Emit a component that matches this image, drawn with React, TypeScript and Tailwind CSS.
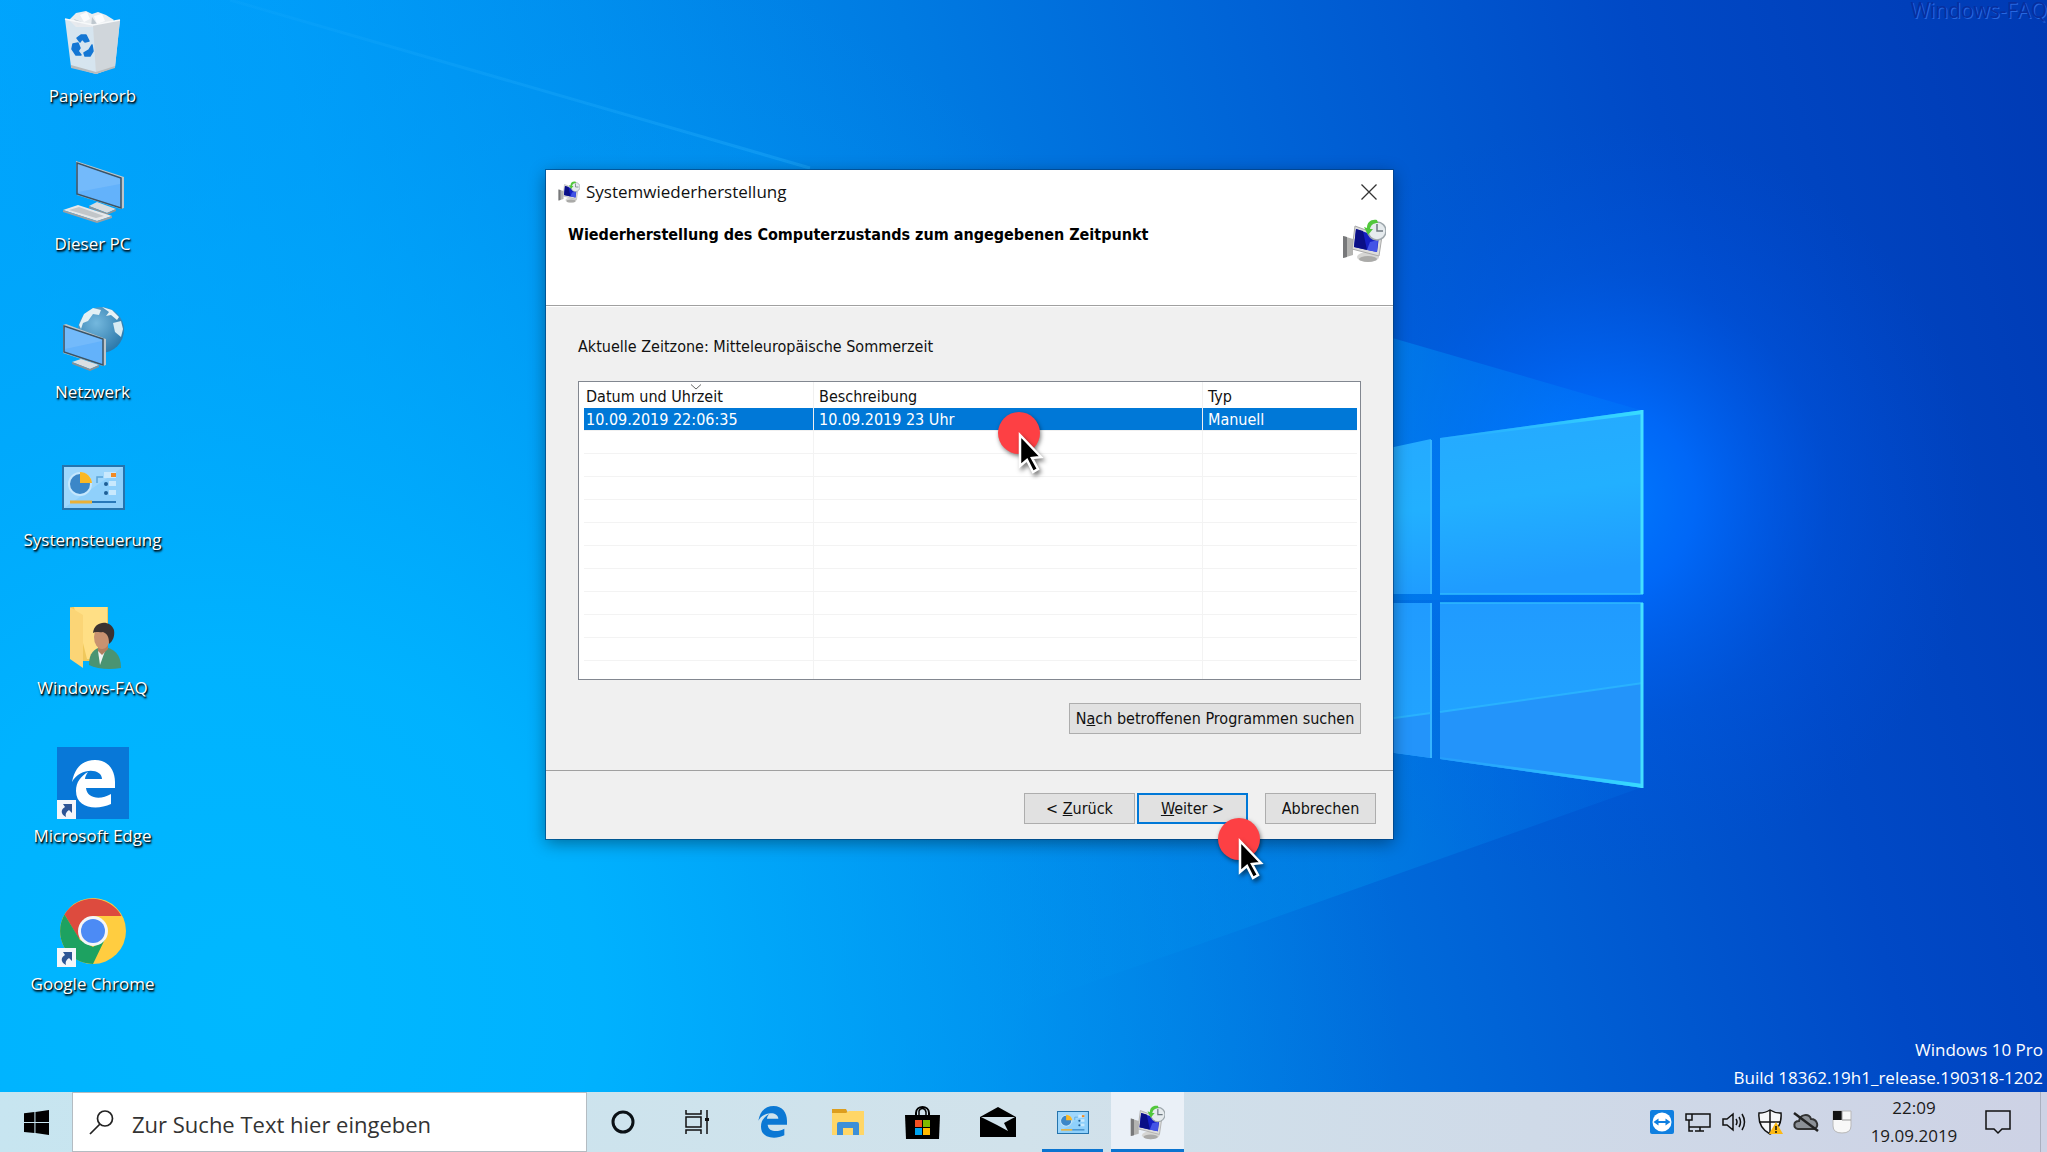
import type { ReactNode } from "react";

const restorePoints = [
  { id: 1, date: "10.09.2019 22:06:35", description: "10.09.2019 23 Uhr", type: "Manuell" },
];

const emptyRows = [1, 2, 3, 4, 5, 6, 7, 8, 9, 10];

function Wallpaper() {
  return (
    <svg
      className="absolute inset-0 h-full w-full"
      viewBox="0 0 2047 1152"
      preserveAspectRatio="xMidYMid slice"
      aria-hidden="true"
    >
      <defs>
        <linearGradient id="sky" x1="0" y1="0.15" x2="1" y2="0">
          <stop offset="0" stopColor="#00a8ff" />
          <stop offset="0.15" stopColor="#009ffb" />
          <stop offset="0.3" stopColor="#008eee" />
          <stop offset="0.45" stopColor="#007be2" />
          <stop offset="0.62" stopColor="#0062d6" />
          <stop offset="0.8" stopColor="#0049c6" />
          <stop offset="1" stopColor="#003ab4" />
        </linearGradient>
        <radialGradient id="low" gradientUnits="userSpaceOnUse" cx="250" cy="1000" r="1150">
          <stop offset="0" stopColor="#00b8ff" />
          <stop offset="0.3" stopColor="#00b4ff" stopOpacity="0.9" />
          <stop offset="0.65" stopColor="#00a4f8" stopOpacity="0.5" />
          <stop offset="1" stopColor="#0090f0" stopOpacity="0" />
        </radialGradient>
        <radialGradient id="glow" gradientUnits="userSpaceOnUse" cx="1600" cy="500" r="380">
          <stop offset="0" stopColor="#007cff" />
          <stop offset="0.25" stopColor="#006cff" stopOpacity="0.85" />
          <stop offset="0.6" stopColor="#005cf0" stopOpacity="0.3" />
          <stop offset="1" stopColor="#0050e0" stopOpacity="0" />
        </radialGradient>
        <linearGradient id="beam" gradientUnits="userSpaceOnUse" x1="560" y1="0" x2="1640" y2="0">
          <stop offset="0" stopColor="#00a8ff" stopOpacity="0" />
          <stop offset="0.75" stopColor="#00a4ff" stopOpacity="0.4" />
          <stop offset="1" stopColor="#0090ff" stopOpacity="0.15" />
        </linearGradient>
        <linearGradient id="beamLow" gradientUnits="userSpaceOnUse" x1="950" y1="0" x2="1640" y2="0">
          <stop offset="0" stopColor="#0098f0" stopOpacity="0" />
          <stop offset="0.6" stopColor="#0098f0" stopOpacity="0.35" />
          <stop offset="1" stopColor="#0090ff" stopOpacity="0.1" />
        </linearGradient>
        <linearGradient id="ray" gradientUnits="userSpaceOnUse" x1="230" y1="0" x2="810" y2="0">
          <stop offset="0" stopColor="#2ab4ff" stopOpacity="0.1" />
          <stop offset="1" stopColor="#2ab4ff" stopOpacity="0.35" />
        </linearGradient>
        <linearGradient id="paneTop" x1="0" y1="0" x2="0.2" y2="1">
          <stop offset="0" stopColor="#26a8ff" />
          <stop offset="0.55" stopColor="#22b0ff" />
          <stop offset="1" stopColor="#1f9cff" />
        </linearGradient>
        <linearGradient id="paneLow" x1="0" y1="0" x2="0" y2="1">
          <stop offset="0" stopColor="#209bff" />
          <stop offset="1" stopColor="#22a8ff" />
        </linearGradient>
        <linearGradient id="edge" x1="0" y1="0" x2="1" y2="0">
          <stop offset="0" stopColor="#28b4ff" stopOpacity="0.3" />
          <stop offset="1" stopColor="#38dcff" />
        </linearGradient>
      </defs>
      <rect width="2047" height="1152" fill="url(#sky)" />
      <rect width="2047" height="1152" fill="url(#low)" />
      <rect width="2047" height="1152" fill="url(#glow)" />
      <path d="M560 96L1640 410V600H560Z" fill="url(#beam)" />
      <path d="M950 600H1640V788L1240 930L950 1032Z" fill="url(#beamLow)" />
      <path d="M230 0L810 168" stroke="url(#ray)" strokeWidth="3" />
      <path d="M1380 450L1431 439V594H1380ZM1440 438L1643 410V594H1440Z" fill="url(#paneTop)" />
      <path d="M1380 603H1431V758L1380 751ZM1440 603H1643V788L1440 759Z" fill="url(#paneLow)" />
      <path d="M1380 720L1431 713V758L1380 751ZM1440 712L1643 683V788L1440 759Z" fill="#2394fa" />
      <path d="M1431 440V594M1431 603V758" stroke="#35b4ff" strokeWidth="2" />
      <path d="M1440 603H1643M1440 594H1643M1380 720L1431 713M1440 712L1643 683" stroke="#2cb8ff" strokeWidth="2" opacity="0.8" />
      <path d="M1440 438L1643 410L1643 414L1440 440ZM1440 759L1643 788V784L1440 757Z" fill="url(#edge)" />
      <path d="M1642 410V594M1642 603V788" stroke="#45e0ff" strokeWidth="3" />
    </svg>
  );
}

function ShortcutArrow() {
  return (
    <g>
      <path d="M1 53H20V72H1Z" fill="#f4f6fa" />
      <path d="M7 57H16V66L13 63C10 65 9 67 10 70C4 67 5 62 9 60Z" fill="#2d5595" />
    </g>
  );
}

function BinIcon() {
  return (
    <svg className="size-[72px]" viewBox="1 0 72 72">
      <path d="M13 13L20 6L30 4L36 7L42 5L50 8L58 13L52 20H20Z" fill="#e9edf0" />
      <path d="M24 8L31 5L34 12L28 15ZM38 9L46 7L49 14L41 17Z" fill="#fbfcfd" />
      <path d="M36 10L41 17L35 20ZM18 12L26 15L22 19Z" fill="#bfc8cf" />
      <path d="M9 12L37 18L64 13L59 60L40 67L15 60Z" fill="#e6eaee" opacity="0.93" />
      <path d="M37 18L64 13L59 60L40 67Z" fill="#d0d6db" />
      <path d="M9 12L37 18L64 13" stroke="#f7f9fa" strokeWidth="1.5" fill="none" />
      <path d="M15 58L40 65L59 59V61L40 67L15 61Z" fill="#b8bbbd" />
      <path
        d="M21 31L25 28H30L33 34L29 35L26 32L24 35ZM17 37L22 36L24 41L22 44L25 48L20 48L16 42ZM28 46L33 43L36 38L37 44L34 49L29 49Z"
        fill="#1477d4"
        stroke="#1477d4"
        strokeWidth="1.5"
        strokeLinejoin="round"
      />
    </svg>
  );
}

function ComputerIcon() {
  return (
    <svg className="size-[72px]" viewBox="2 -1 72 72">
      <path d="M34 50L42 46L61 53L52 57Z" fill="#d8dde0" />
      <path d="M34 50L52 57L61 53V55L52 59L34 52Z" fill="#8d9498" />
      <path d="M21 5L24 6L69 21V52L66 53L22 39Z" fill="#bcc5ca" />
      <path d="M22 7L66 22V52L22 38Z" fill="#63b2fb" stroke="#3b5364" strokeWidth="1.5" />
      <path d="M23 8L65 23V28L23 36Z" fill="#8cc6fc" opacity="0.4" />
      <path d="M8 54L23 49L57 60L42 65Z" fill="#e6e8ea" />
      <path d="M8 54L42 65L57 60V62L42 67L8 56Z" fill="#9ba1a5" />
      <path d="M14 54L24 51L49 60L41 62Z" fill="#c2c6c9" />
    </svg>
  );
}

function NetworkIcon() {
  return (
    <svg className="size-[72px]" viewBox="2 0 72 72">
      <defs>
        <radialGradient id="globe" cx="0.4" cy="0.35" r="0.7">
          <stop offset="0" stopColor="#74b8de" />
          <stop offset="1" stopColor="#2a76a8" />
        </radialGradient>
      </defs>
      <circle cx="46" cy="27" r="23" fill="url(#globe)" />
      <path d="M24 22L29 11L38 5L46 7L44 12L38 11L33 18L28 20L26 26Z" fill="#e2f0f5" />
      <path d="M47 4L57 7L64 14L62 17L56 12L51 13L54 9Z" fill="#e6f2f6" />
      <path d="M58 20L66 18L68 26L66 34L60 29Z" fill="#d8ebf3" />
      <path d="M17 59L26 56L44 62L35 66Z" fill="#dadfe2" />
      <path d="M17 59L35 66L44 62V64L35 68L17 61Z" fill="#899196" />
      <path d="M8 22L11 21L51 36V62L48 63L8 50Z" fill="#bcc5ca" />
      <path d="M9 23L48 36V62L9 49Z" fill="#63b2fb" stroke="#3b5364" strokeWidth="1.5" />
      <path d="M10 24L47 37V38L10 46Z" fill="#8cc6fc" opacity="0.4" />
    </svg>
  );
}

function ControlPanelArt() {
  return (
    <g>
      <path d="M7 14H68V57H7Z" fill="#8fd0fb" stroke="#2574ad" strokeWidth="2" />
      <path d="M8 15H67L8 56Z" fill="#a9dcfd" opacity="0.6" />
      <circle cx="24" cy="32" r="11" fill="#3b87c8" stroke="#c4e7fd" strokeWidth="2" />
      <path d="M24 20V31H36A12 12 0 0 0 24 20Z" fill="#fbb824" />
      <path d="M41 31V25H47" stroke="#5aa4d8" strokeWidth="1.5" fill="none" />
      <path d="M48 20H60V26H48ZM53 29H60V34H53ZM53 38H60V43H53Z" fill="#c9e9fd" />
      <path d="M55 21H60V25H55Z" fill="#f08a24" />
      <circle cx="50" cy="32" r="2" fill="#1e5f96" />
      <circle cx="50" cy="41" r="2" fill="#1e5f96" />
      <path d="M14 50H36" stroke="#eab035" strokeWidth="3" />
      <path d="M36 50H60" stroke="#2878b8" strokeWidth="2" />
    </g>
  );
}

function UserFolderIcon() {
  return (
    <svg className="size-[72px]" viewBox="0 0 72 72">
      <path d="M14 8H51V62H26Z" fill="#f0c85c" />
      <path d="M17 8H50V60H30Z" fill="#ffdf85" />
      <path d="M13 8L26 16V69L13 60Z" fill="#fbd576" />
      <path d="M32 66C32 54 37 49 46 48C57 49 64 55 64 69C52 71 40 70 32 66Z" fill="#4a9472" />
      <path d="M41 52L43 66L48 52Z" fill="#f2f4f2" />
      <path d="M41 44H51V50L45 56L41 52Z" fill="#b17f60" />
      <ellipse cx="45" cy="38" rx="8" ry="12" fill="#c99270" />
      <path d="M36 34C37 22 53 20 57 31C58 37 56 42 52 45C52 37 50 35 46 33C42 34 39 32 36 34Z" fill="#3b3230" />
    </svg>
  );
}

// Spartan "e", drawn on a 44 x 48 grid
const edgePath =
  "M0 22C3 6 12 0 23 0C36 0 43 10 43 22V28H14C15 39 29 40 39 34V44C24 51 4 48 4 31C4 22 9 16 16 12C14 15 13 17 13 19H30C30 8 8 7 0 22Z";

function EdgeIcon() {
  return (
    <svg className="size-[72px]" viewBox="1 0 72 72">
      <path d="M1 0H73V72H1Z" fill="#0878d8" />
      <g transform="translate(16 13)">
        <path d={edgePath} fill="#fff" />
      </g>
      <ShortcutArrow />
    </svg>
  );
}

function ChromeIcon() {
  return (
    <svg className="size-[72px]" viewBox="1 0 72 72">
      <circle cx="37" cy="36" r="33" fill="#ffcd40" />
      <path d="M8.500 19.500A33 33 0 0 1 65.500 21H37L23 44Z" fill="#dd4b3e" />
      <path d="M8.500 19.500L24 45L37 52L49 44L37 69A33 33 0 0 1 8.500 19.500Z" fill="#1da261" />
      <circle cx="37" cy="36" r="15" fill="#f4f6f8" />
      <circle cx="37" cy="36" r="12" fill="#4c8bf5" />
      <ShortcutArrow />
    </svg>
  );
}

function RestoreIcon({ className }: { className: string }) {
  return (
    <svg className={className} viewBox="0 0 44 44" aria-hidden="true">
      <path d="M1 17L11 20V36L1 39Z" fill="#b4b4b2" />
      <path d="M1 17L5 18V38L1 39Z" fill="#77787a" />
      <ellipse cx="26" cy="38" rx="11" ry="5" fill="#d6d6d4" />
      <ellipse cx="26" cy="40" rx="9" ry="3" fill="#aaaaa8" />
      <path d="M13 7L40 17L37 37L10 30Z" fill="#dcdcda" stroke="#a9a9a9" />
      <path d="M14 10L37 18L35 33L12 28Z" fill="#1520c4" />
      <path d="M14 10L21 12L25 31L12 28Z" fill="#0a0f86" />
      <path d="M28 23L36 21L35 33L25 31Z" fill="#4354e6" />
      <circle cx="35" cy="12" r="9" fill="#e6ebee" stroke="#9fa8ad" strokeWidth="1.5" />
      <path d="M35 5V12H41" stroke="#6d7880" strokeWidth="1.5" fill="none" />
      <path d="M35 1C29 0 25 3 25 9L22 8L26 16L31 10L28 10C29 6 31 4 36 4Z" fill="#52c83c" />
    </svg>
  );
}

const desktopIcons: { label: string; icon: ReactNode }[] = [
  { label: "Papierkorb", icon: <BinIcon /> },
  { label: "Dieser PC", icon: <ComputerIcon /> },
  { label: "Netzwerk", icon: <NetworkIcon /> },
  {
    label: "Systemsteuerung",
    icon: (
      <svg className="size-[72px]" viewBox="1 -1 72 72">
        <ControlPanelArt />
      </svg>
    ),
  },
  { label: "Windows-FAQ", icon: <UserFolderIcon /> },
  { label: "Microsoft Edge", icon: <EdgeIcon /> },
  { label: "Google Chrome", icon: <ChromeIcon /> },
];

function ClickMarker({ className }: { className: string }) {
  return (
    <svg className={`pointer-events-none absolute h-[72px] w-[60px] ${className}`} viewBox="0 0 60 72" aria-hidden="true">
      <g className="drop-shadow-[1px_2px_2px_rgba(0,0,0,0.5)]">
        <circle cx="25" cy="25" r="21" fill="#fd4044" />
      </g>
      <g className="drop-shadow-[2px_3px_2px_rgba(0,0,0,0.5)]">
        <path
          d="M26 27V58L33 52L39 64L44 61L38 50L47 49Z"
          fill="#000"
          stroke="#fff"
          strokeWidth="2.500"
        />
      </g>
    </svg>
  );
}

function RestoreDialog() {
  return (
    <section
      aria-labelledby="dialog-title"
      className="absolute left-[546px] top-[170px] w-[847px] bg-[#f0f0f0] font-['DejaVu_Sans_Condensed','Noto_Sans',sans-serif] text-[16px] leading-[20px] text-[#111] shadow-[0_0_0_1px_rgba(0,60,120,0.6),0_4px_16px_rgba(0,0,0,0.4)]"
    >
      <header className="h-[136px] border-b border-[#a0a0a0] bg-white">
        <div className="flex h-11 items-center pl-3 pr-4">
          <RestoreIcon className="size-[22px]" />
          <h1
            id="dialog-title"
            className="ml-[6px] font-['Open_Sans','Noto_Sans',sans-serif] text-[17px]"
          >
            Systemwiederherstellung
          </h1>
          <button type="button" aria-label="Schließen" className="ml-auto">
            <svg className="size-4" viewBox="0 0 16 16" stroke="#333" strokeWidth="1.300">
              <path d="M0.500 0.500L15.500 15.500M15.500 0.500L0.500 15.500" />
            </svg>
          </button>
        </div>
        <div className="flex items-start justify-between pl-[22px] pr-[7px]">
          <h2 className="pt-[11px] font-bold text-black">
            Wiederherstellung des Computerzustands zum angegebenen Zeitpunkt
          </h2>
          <RestoreIcon className="mt-[5px] size-11" />
        </div>
      </header>

      <div className="border-t border-white px-8 pt-[30px]">
        <p>Aktuelle Zeitzone: Mitteleuropäische Sommerzeit</p>
        <div className="mt-6 border border-[#828790] bg-white pl-[5px] pr-[3px]">
          <table className="w-full table-fixed border-separate border-spacing-0 text-left">
            <colgroup>
              <col className="w-[230px]" />
              <col className="w-[389px]" />
              <col />
            </colgroup>
            <thead>
              <tr className="h-[26px]">
                <th scope="col" className="relative border-r border-[#f0f0f0] pb-0 pl-[2px] pt-[3px] font-normal">
                  Datum und Uhrzeit
                  <svg className="absolute left-[106px] top-[2px] h-[6px] w-3" viewBox="0 0 12 6" fill="none" stroke="#666">
                    <path d="M1 0.500L6 5L11 0.500" />
                  </svg>
                </th>
                <th scope="col" className="border-r border-[#f0f0f0] pb-0 pl-[5px] pt-[3px] font-normal">
                  Beschreibung
                </th>
                <th scope="col" className="pb-0 pl-[5px] pt-[3px] font-normal">
                  Typ
                </th>
              </tr>
            </thead>
            <tbody>
              {restorePoints.map((point) => (
                <tr key={point.id} className="h-[23px] bg-[#0078d7] text-white">
                  <td className="border-b border-r border-[#f0f0f0] pb-0 pl-[2px] pt-[2px]">{point.date}</td>
                  <td className="border-b border-r border-[#f0f0f0] pb-0 pl-[5px] pt-[2px]">{point.description}</td>
                  <td className="border-b border-[#f0f0f0] pb-0 pl-[5px] pt-[2px]">{point.type}</td>
                </tr>
              ))}
              {emptyRows.map((row) => (
                <tr key={row} className="h-[23px]">
                  <td className="border-b border-r border-[#f3f3f3]" />
                  <td className="border-b border-r border-[#f3f3f3]" />
                  <td className="border-b border-[#f3f3f3]" />
                </tr>
              ))}
              <tr className="h-[18px]">
                <td className="border-r border-[#f3f3f3]" />
                <td className="border-r border-[#f3f3f3]" />
                <td />
              </tr>
            </tbody>
          </table>
        </div>
        <div className="flex justify-end pb-9 pt-[23px]">
          <button type="button" className="h-[31px] w-[292px] border border-[#adadad] bg-[#e1e1e1]">
            N<u>a</u>ch betroffenen Programmen suchen
          </button>
        </div>
      </div>

      <footer className="flex justify-end border-t border-[#a0a0a0] pb-[15px] pr-[17px] pt-[22px]">
        <button type="button" className="h-[31px] w-[111px] border border-[#adadad] bg-[#e1e1e1]">
          &lt; <u>Z</u>urück
        </button>
        <button type="button" className="ml-[2px] h-[31px] w-[111px] border-2 border-[#0078d7] bg-[#e1e1e1]">
          <u>W</u>eiter &gt;
        </button>
        <button type="button" className="ml-[17px] h-[31px] w-[111px] border border-[#adadad] bg-[#e1e1e1]">
          Abbrechen
        </button>
      </footer>

      <ClickMarker className="left-[448px] top-[238px]" />
      <ClickMarker className="left-[668px] top-[644px]" />
    </section>
  );
}

const pinnedApps: { name: string; state: "pinned" | "open" | "active"; icon: ReactNode }[] = [
  {
    name: "Cortana",
    state: "pinned",
    icon: (
      <svg className="size-6" viewBox="0 0 24 24">
        <circle cx="12" cy="12" r="10" fill="none" stroke="#0b1116" strokeWidth="3" />
      </svg>
    ),
  },
  {
    name: "Taskansicht",
    state: "pinned",
    icon: (
      <svg className="h-6 w-[26px]" viewBox="0 0 26 24" fill="none" stroke="#111" strokeWidth="1.500">
        <path d="M1 0V4H16V0M1 7H16V17H1ZM1 24V20H16V24M22 0V24" />
        <path d="M20 8H24V11H20Z" fill="#111" stroke="none" />
      </svg>
    ),
  },
  {
    name: "Microsoft Edge",
    state: "pinned",
    icon: (
      <svg className="size-8" viewBox="0 0 44 48">
        <path d={edgePath} fill="#0b78d4" />
      </svg>
    ),
  },
  {
    name: "Explorer",
    state: "pinned",
    icon: (
      <svg className="h-7 w-8" viewBox="0 0 32 28">
        <path d="M0 1H14L16 5H0Z" fill="#dd9e1e" />
        <path d="M0 5H14L17 3H32V27H0Z" fill="#ffd666" />
        <path d="M5 27V16Q5 14 7 14H25Q27 14 27 16V27H21V20H11V27Z" fill="#3c8fd8" />
      </svg>
    ),
  },
  {
    name: "Microsoft Store",
    state: "pinned",
    icon: (
      <svg className="size-[35px]" viewBox="0 0 35 35">
        <path d="M11 12V8C11 0 24 0 24 8V12" fill="none" stroke="#000" strokeWidth="2" />
        <path d="M14 10V6C15 3 20 2 21 7V10" fill="none" stroke="#000" strokeWidth="1.500" />
        <path d="M0 10H35L34 34H1Z" fill="#000" />
        <path d="M10 15H17V22H10Z" fill="#f25022" />
        <path d="M18 15H25V22H18Z" fill="#7fba00" />
        <path d="M10 23H17V30H10Z" fill="#00a4ef" />
        <path d="M18 23H25V30H18Z" fill="#ffb900" />
      </svg>
    ),
  },
  {
    name: "Mail",
    state: "pinned",
    icon: (
      <svg className="h-[30px] w-9" viewBox="0 0 36 30">
        <path d="M0 10L18 0L36 10V30H0Z" fill="#000" />
        <path d="M1 10H35L24 16L28 24L17 18Z" fill="#d0e2ec" />
      </svg>
    ),
  },
  {
    name: "Systemsteuerung",
    state: "open",
    icon: (
      <svg className="h-[23px] w-8" viewBox="6 13 63 45">
        <ControlPanelArt />
      </svg>
    ),
  },
  { name: "Systemwiederherstellung", state: "active", icon: <RestoreIcon className="size-[35px]" /> },
];

const trayIcons: { name: string; icon: ReactNode }[] = [
  {
    name: "TeamViewer",
    icon: (
      <svg className="size-6" viewBox="0 0 24 24">
        <rect width="24" height="24" rx="2" fill="#0f7fe0" />
        <circle cx="12" cy="12" r="9.500" fill="#fff" />
        <path d="M3.500 12L8.500 8.500V11H15.500V8.500L20.500 12L15.500 15.500V13H8.500V15.500Z" fill="#0f7fe0" />
      </svg>
    ),
  },
  {
    name: "Netzwerk",
    icon: (
      <svg className="size-[26px]" viewBox="0 0 26 26" fill="none" stroke="#111" strokeWidth="1.500">
        <path d="M7 5H25V18H4V12M1 5H7V11H1ZM4 11V22H8M15 18V22M10 22H19" />
      </svg>
    ),
  },
  {
    name: "Lautsprecher",
    icon: (
      <svg className="size-6" viewBox="0 0 24 24" fill="none" stroke="#111" strokeWidth="1.500">
        <path d="M1 9H5L11 4V20L5 15H1ZM14 9Q16 12 14 15M17 7Q20 12 17 17M20 4Q25 12 20 20" />
      </svg>
    ),
  },
  {
    name: "Windows-Sicherheit",
    icon: (
      <svg className="size-[26px]" viewBox="0 0 26 26">
        <path d="M13 1C16 3 20 4 24 4C25 15 21 21 13 25C5 21 1 15 2 4C6 4 10 3 13 1Z" fill="#f6f7f9" stroke="#111" strokeWidth="1.500" />
        <path d="M13 1V25M2 13H24" stroke="#111" strokeWidth="1.500" />
        <path d="M19 13L26 25H12Z" fill="#fdb913" />
        <path d="M19 17V21M19 22V24" stroke="#111" strokeWidth="1.500" />
      </svg>
    ),
  },
  {
    name: "OneDrive",
    icon: (
      <svg className="size-[26px]" viewBox="0 0 26 26">
        <path d="M5 20C0 19 0 12 6 12C7 5 16 4 18 10C24 10 27 18 21 20Z" fill="#8c9096" stroke="#333" strokeWidth="2" />
        <path d="M1 4L25 22" stroke="#222" strokeWidth="2.500" />
      </svg>
    ),
  },
  {
    name: "Maus",
    icon: (
      <svg className="h-6 w-5" viewBox="0 0 20 24">
        <path d="M1 1H19V16Q19 23 10 23Q1 23 1 16Z" fill="#f8f8f8" stroke="#b8b8b8" />
        <path d="M1 1H10V10H1Z" fill="#111" />
        <path d="M10 1V10H19" fill="none" stroke="#999" />
      </svg>
    ),
  },
];

function Taskbar() {
  return (
    <nav
      aria-label="Taskleiste"
      className="relative flex h-[60px] items-stretch bg-linear-to-r from-[#c7e5f0] via-[#d1e2eb] to-[#cdd2e5] text-[#1b1b1b]"
    >
      <button type="button" aria-label="Start" className="flex w-[72px] items-center justify-center">
        <svg className="size-[25px]" viewBox="0 0 24 24">
          <path d="M0 3L10 2V11.500H0ZM11 2L24 0V11.500H11ZM0 12.500H10V22L0 21ZM11 12.500H24V24L11 22Z" fill="#000" />
        </svg>
      </button>
      <label className="flex w-[515px] items-center border border-[#b4bcc2] bg-white pl-4">
        <svg className="size-[25px]" viewBox="0 0 25 25" fill="none" stroke="#222" strokeWidth="1.700">
          <circle cx="16" cy="8.500" r="7.500" />
          <path d="M11 14L1 24" />
        </svg>
        <input
          type="search"
          aria-label="Suche"
          placeholder="Zur Suche Text hier eingeben"
          className="ml-[18px] min-w-0 flex-1 bg-transparent pt-1 text-[22px] outline-none placeholder:text-[#333] placeholder:opacity-100"
        />
      </label>
      <div className="-ml-px flex gap-[2px]">
        {pinnedApps.map((app) => (
          <button
            key={app.name}
            type="button"
            aria-label={app.name}
            className={`relative flex w-[73px] items-center justify-center ${
              app.state === "active" ? "bg-[#eaf0f7]" : ""
            }`}
          >
            {app.icon}
            {app.state === "open" && <span className="absolute inset-x-[6px] bottom-0 h-[3px] bg-[#0a74d0]" />}
            {app.state === "active" && <span className="absolute inset-x-0 bottom-0 h-[3px] bg-[#0a74d0]" />}
          </button>
        ))}
      </div>
      <div className="ml-auto flex items-center">
        {trayIcons.map((item) => (
          <button key={item.name} type="button" aria-label={item.name} className="flex w-9 justify-center">
            {item.icon}
          </button>
        ))}
      </div>
      <button type="button" className="flex w-[108px] flex-col items-center justify-center text-[17px] leading-[28px]">
        <span>22:09</span>
        <span>19.09.2019</span>
      </button>
      <button type="button" aria-label="Info-Center" className="flex w-[60px] items-center justify-center">
        <svg className="size-[26px]" viewBox="0 0 26 26" fill="none" stroke="#111" strokeWidth="1.500">
          <path d="M1 2H25V20H17L13 24L9 20H1Z" />
        </svg>
      </button>
      <button type="button" aria-label="Desktop anzeigen" className="ml-3 w-[7px] border-l border-[#aab0c0]" />
    </nav>
  );
}

export default function App() {
  return (
    <div className="relative flex min-h-screen flex-col overflow-hidden bg-[#0078d7] font-['Open_Sans','Noto_Sans',sans-serif]">
      <Wallpaper />
      <main className="relative flex flex-1 items-stretch justify-between">
        <ul className="w-[185px] pt-[7px]">
          {desktopIcons.map((item) => (
            <li key={item.label} className="h-[148px]">
              <button type="button" className="flex w-full flex-col items-center text-[17px] leading-[24px] text-white [text-shadow:1px_2px_2px_rgba(0,0,0,0.9),1px_1px_1px_rgba(0,0,0,0.8)]">
                {item.icon}
                <span className="mt-[5px]">{item.label}</span>
              </button>
            </li>
          ))}
        </ul>
        <div className="flex flex-col items-end justify-between text-right text-white">
          <p className="text-[21px] leading-[20px] text-[#082f9e] [text-shadow:1px_1px_0_#2668e0]">Windows-FAQ</p>
          <p className="pr-1 text-[17px] leading-[28px]">
            Windows 10 Pro
            <br />
            Build 18362.19h1_release.190318-1202
          </p>
        </div>
        <RestoreDialog />
      </main>
      <Taskbar />
    </div>
  );
}
